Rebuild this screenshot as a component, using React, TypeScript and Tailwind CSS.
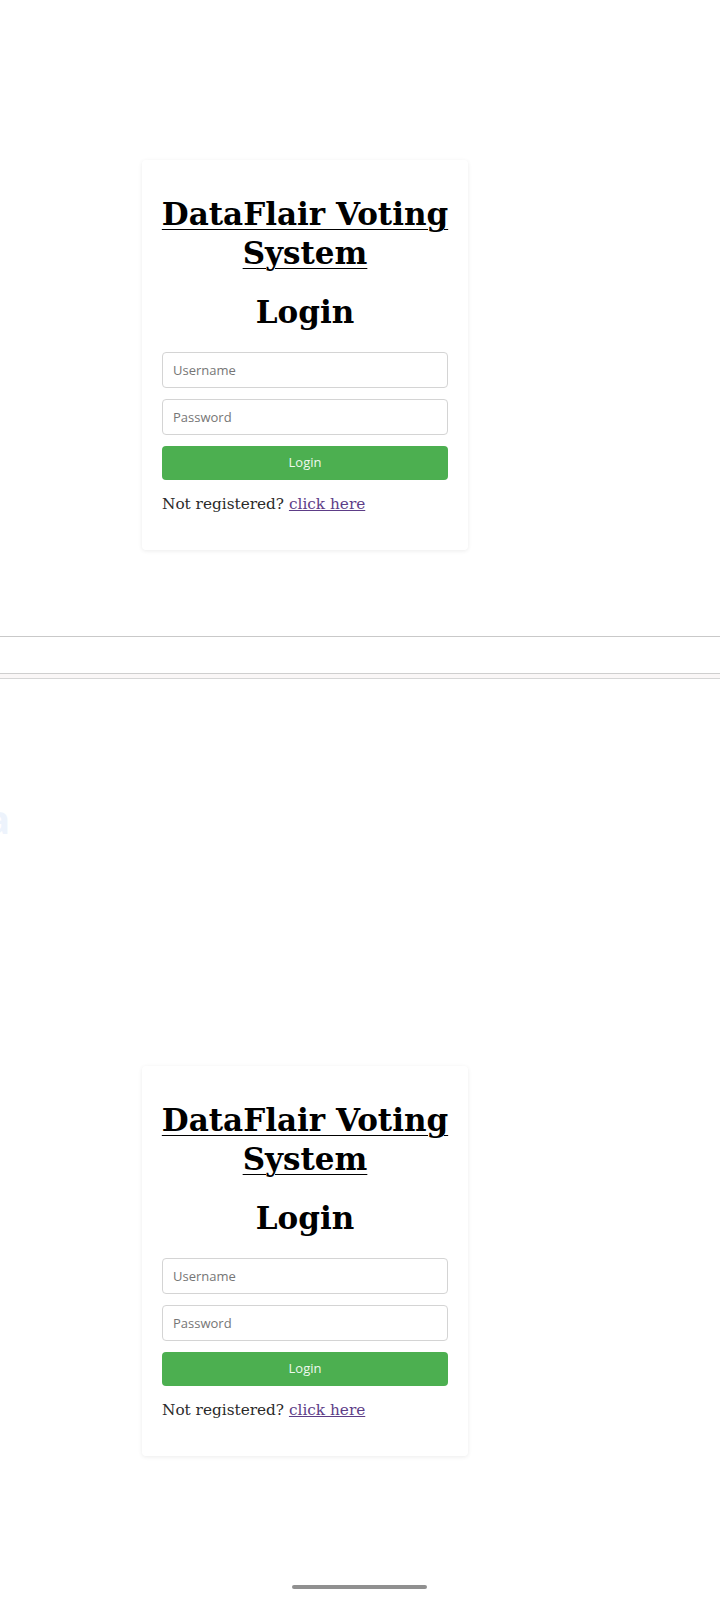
import React from "react";

function LoginCard() {
  return (
    <div className="ml-[142px] w-[326px] rounded-[4px] bg-white px-[20px] pt-[35px] pb-[34px] shadow-[0_1px_4px_rgba(0,0,0,0.08)]">
      <h1
        className="-mx-[20px] text-center text-[31px] font-bold leading-[39px] text-black underline decoration-1 underline-offset-[4px]"
        style={{ fontFamily: '"DejaVu Serif", serif' }}
      >
        DataFlair Voting
        <br />
        System
      </h1>
      <h2
        className="mt-[21px] text-center text-[31px] font-bold leading-[36px] text-black"
        style={{ fontFamily: '"DejaVu Serif", serif' }}
      >
        Login
      </h2>
      <div className="mt-[22px] flex flex-col gap-[11px]" style={{ fontFamily: '"Open Sans", sans-serif' }}>
        <input
          placeholder="Username"
          className="h-[36px] w-full rounded-[4px] border border-[#d4d4d4] bg-white px-[10px] text-[13px] text-black outline-none placeholder:text-[#767676]"
        />
        <input
          placeholder="Password"
          type="password"
          className="h-[36px] w-full rounded-[4px] border border-[#d4d4d4] bg-white px-[10px] text-[13px] text-black outline-none placeholder:text-[#767676]"
        />
        <button className="h-[34px] w-full rounded-[4px] bg-[#4caf50] text-[13px] text-[#eef8ee]">
          Login
        </button>
      </div>
      <p
        className="mt-[12px] text-[15.3px] leading-[24px] text-[#2a2a2a]"
        style={{ fontFamily: '"DejaVu Serif", serif' }}
      >
        Not registered?{" "}
        <a href="#" className="text-[#5d3d87] underline">
          click here
        </a>
      </p>
    </div>
  );
}

export default function App() {
  return (
    <div className="relative h-[1600px] w-[720px] overflow-hidden bg-white">
      <div className="pt-[160px]">
        <LoginCard />
      </div>
      <div className="mt-[86px] h-px w-full bg-[#c9c9c9]" />
      <div className="mt-[36px] h-px w-full bg-[#cfcfcf]" />
      <div className="h-[4px] w-full bg-[#faf7f7]" />
      <div className="h-px w-full bg-[#d6d6d6]" />
      <div
        className="mt-[120px] -ml-[14px] text-[40px] font-bold leading-[40px] text-[#edf3fc]"
        style={{ fontFamily: '"Open Sans", sans-serif' }}
      >
        a
      </div>
      <div className="pt-[227px]">
        <LoginCard />
      </div>
      <div className="absolute bottom-[11px] left-[292px] h-[4px] w-[135px] rounded-full bg-[#909090]" />
    </div>
  );
}
